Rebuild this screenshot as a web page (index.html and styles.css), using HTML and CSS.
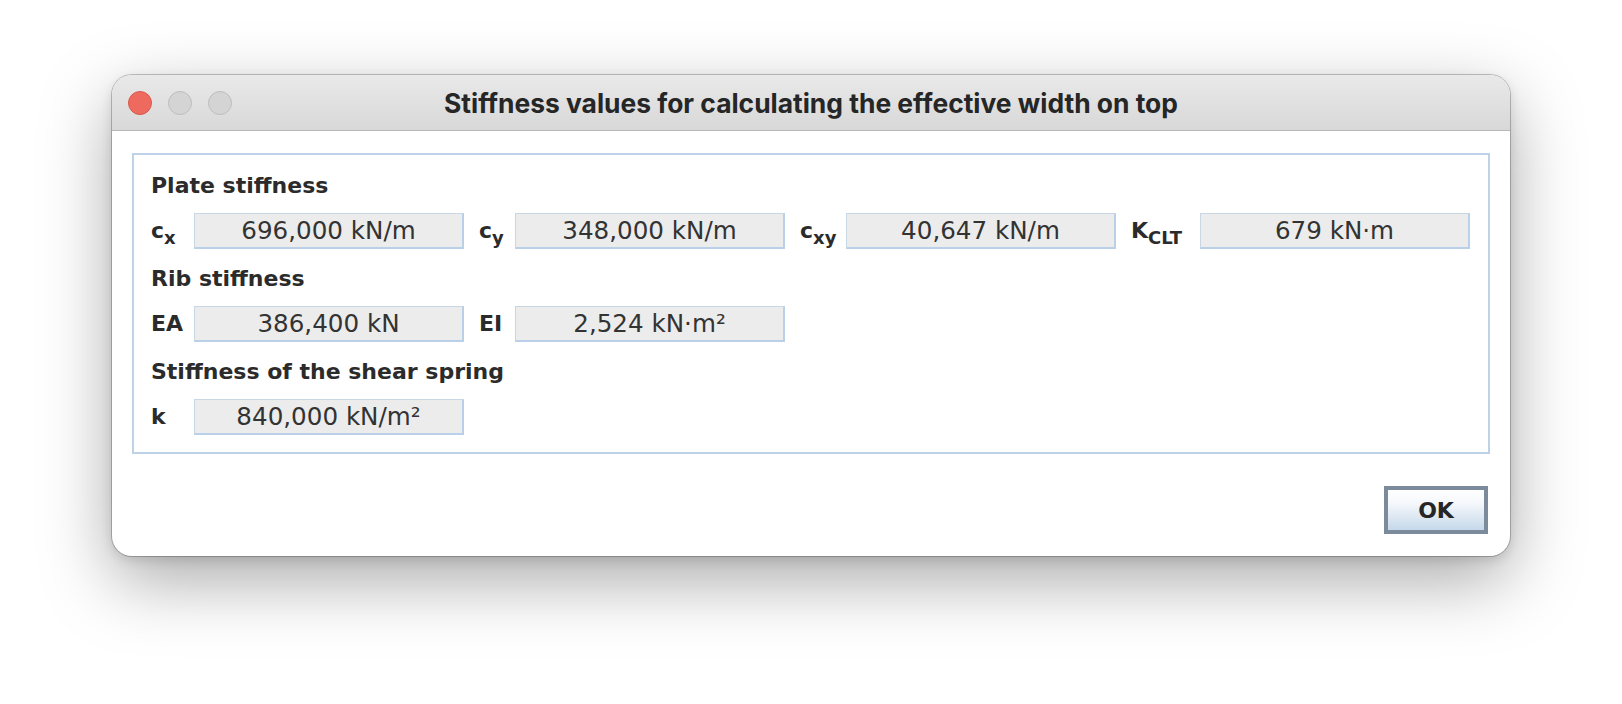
FILE: index.html
```html
<!DOCTYPE html>
<html lang="en">
<head>
<meta charset="utf-8">
<title>Stiffness values</title>
<link rel="stylesheet" href="styles.css">
</head>
<body>
<div class="window">
  <div class="titlebar">
    <div class="lights">
      <span class="light red"></span>
      <span class="light grey"></span>
      <span class="light grey"></span>
    </div>
    <div class="title">Stiffness values for calculating the effective width on top</div>
  </div>
  <div class="body">
    <div class="group">
      <div class="heading">Plate stiffness</div>
      <div class="label">c<sub>x</sub></div>
      <div class="field">696,000 kN/m</div>
      <div class="label">c<sub>y</sub></div>
      <div class="field">348,000 kN/m</div>
      <div class="label">c<sub>xy</sub></div>
      <div class="field">40,647 kN/m</div>
      <div class="label">K<sub>CLT</sub></div>
      <div class="field">679 kN·m</div>

      <div class="heading rib">Rib stiffness</div>
      <div class="label">EA</div>
      <div class="field">386,400 kN</div>
      <div class="label">EI</div>
      <div class="field">2,524 kN·m²</div>

      <div class="heading spring">Stiffness of the shear spring</div>
      <div class="label">k</div>
      <div class="field">840,000 kN/m²</div>
    </div>
    <div class="buttons">
      <button class="ok">OK</button>
    </div>
  </div>
</div>
</body>
</html>
```

FILE: styles.css
```css
html, body {
  margin: 0;
  padding: 0;
  background: #ffffff;
}
body {
  width: 1622px;
  height: 704px;
  overflow: hidden;
  font-family: "DejaVu Sans", sans-serif;
  color: #2b2b2b;
}
.window {
  margin: 75px 0 0 112px;
  width: 1398px;
  height: 481px;
  box-sizing: border-box;
  border-radius: 20px;
  background: #ffffff;
  overflow: hidden;
  box-shadow: 0 0 0 1px rgba(0,0,0,0.22), 0 24px 70px rgba(0,0,0,0.34), 0 4px 12px rgba(0,0,0,0.12);
  display: flex;
  flex-direction: column;
}
.titlebar {
  height: 56px;
  flex: none;
  box-sizing: border-box;
  background: linear-gradient(#e9e9e9, #d8d8d8);
  border-bottom: 1px solid #b9b9b9;
  display: flex;
  align-items: center;
  position: relative;
}
.lights {
  display: flex;
  gap: 16px;
  padding-left: 16px;
  margin-top: 1px;
}
.light {
  width: 24px;
  height: 24px;
  border-radius: 50%;
  box-sizing: border-box;
}
.light.red {
  background: #ee6a5e;
  border: 1px solid #d9584c;
}
.light.grey {
  background: #d4d4d4;
  border: 1px solid #bdbdbd;
}
.title {
  position: absolute;
  left: 0;
  right: 0;
  top: 0;
  bottom: 0;
  display: flex;
  align-items: center;
  justify-content: center;
  font-family: "Inter", sans-serif;
  font-weight: bold;
  font-size: 26.4px;
  color: #262626;
  pointer-events: none;
}
.body {
  flex: 1;
  padding: 22px 20px 21px 20px;
  display: flex;
  flex-direction: column;
}
.group {
  border: 2px solid #bdd2e8;
  padding: 17px 18px 17px 17px;
  display: grid;
  grid-template-columns: 28px 270px 21px 270px 31px 270px 54px 270px;
  column-gap: 15px;
  row-gap: 13px;
  align-items: center;
}
.heading {
  grid-column: 1 / -1;
  font-weight: bold;
  font-size: 22px;
  line-height: 28px;
  height: 28px;
  white-space: nowrap;
}
.heading.rib {
  margin-top: 3px;
}
.heading.spring {
  margin-top: 3px;
}
.label {
  font-weight: bold;
  font-size: 22px;
  white-space: nowrap;
  line-height: 28px;
}
.label sub {
  font-size: 18px;
  vertical-align: -6px;
  line-height: 0;
}
.field {
  height: 36px;
  box-sizing: border-box;
  background: #ececec;
  border-top: 1px solid #c9d6e3;
  border-left: 1px solid #c9d6e3;
  border-right: 2px solid #b9d0e8;
  border-bottom: 2px solid #b9d0e8;
  font-size: 24.6px;
  line-height: 33px;
  text-align: center;
  color: #333333;
  white-space: nowrap;
}
.buttons {
  margin-top: 32px;
  display: flex;
  justify-content: flex-end;
  padding-right: 2px;
}
.ok {
  width: 104px;
  height: 48px;
  box-sizing: border-box;
  border: 4px solid #7b8b9b;
  background: linear-gradient(#ffffff 0%, #f4f7fb 35%, #c5d8ea 100%);
  font-family: "DejaVu Sans", sans-serif;
  font-weight: bold;
  font-size: 22px;
  color: #262626;
  padding: 0;
}
```
